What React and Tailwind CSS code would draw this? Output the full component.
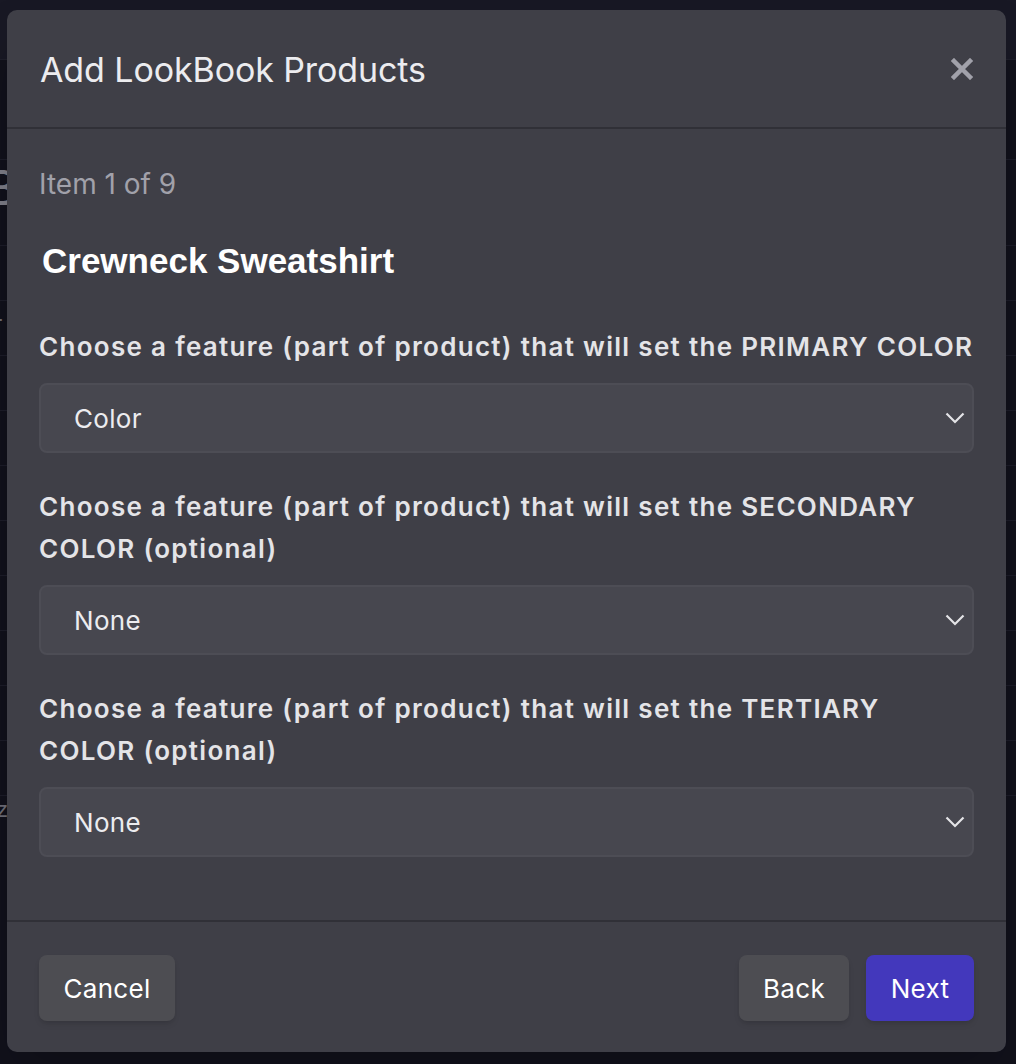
const features = [
  {
    label: "Choose a feature (part of product) that will set the PRIMARY COLOR",
    value: "Color",
  },
  {
    label:
      "Choose a feature (part of product) that will set the SECONDARY COLOR (optional)",
    value: "None",
  },
  {
    label:
      "Choose a feature (part of product) that will set the TERTIARY COLOR (optional)",
    value: "None",
  },
];

const FeatureSelect = ({ label, value, first }) => {
  return (
    <div className={first ? "mt-[45px]" : "mt-[33px]"}>
      <label className="block text-[26px] leading-[42px] font-semibold tracking-[1.3px] text-[#e4e4e7]">
        {label}
      </label>
      <div className="relative mt-[15px] h-[70px] rounded-lg border-2 border-[#4d4d55] bg-[#47474f]">
        <span className="absolute left-[33px] top-1/2 -translate-y-1/2 text-[26px] tracking-[0.3px] text-[#ececef]">
          {value}
        </span>
        <svg
          className="absolute right-[7px] top-1/2 -translate-y-1/2 text-[#e4e4e7]"
          width="20"
          height="12"
          viewBox="0 0 20 12"
          fill="none"
        >
          <path
            d="M1.5 1.5 L10 10 L18.5 1.5"
            stroke="currentColor"
            strokeWidth="2.2"
          />
        </svg>
      </div>
    </div>
  );
};

const App = () => {
  return (
    <div className="relative h-[1064px] w-[1016px] overflow-hidden bg-[#11111b] font-['Inter',sans-serif]">
      {/* page behind the modal */}
      <div className="h-[60px] border-b border-[#1f1f2b] bg-[#181824]" />
      <div className="flex flex-col">
        <div className="h-[100px] border-b border-[#1c1c28]" />
        <div className="h-[86px] border-b border-[#1c1c28]" />
        <div className="h-[55px] border-b border-[#1c1c28]" />
        <div className="h-[55px] border-b border-[#1c1c28]" />
        <div className="h-[55px] border-b border-[#1c1c28]" />
        <div className="h-[55px] border-b border-[#1c1c28]" />
        <div className="h-[55px] border-b border-[#1c1c28]" />
        <div className="h-[55px] border-b border-[#1c1c28]" />
        <div className="h-[55px] border-b border-[#1c1c28]" />
        <div className="h-[55px] border-b border-[#1c1c28]" />
        <div className="h-[55px] border-b border-[#1c1c28]" />
        <div className="h-[55px] border-b border-[#1c1c28]" />
      </div>
      <span className="absolute left-[-14px] top-[164px] text-[48px] leading-none text-[#7d7d87]">B</span>
      <span className="absolute left-[-6px] top-[312px] text-[22px] leading-none text-[#6d6d77]">r</span>
      <span className="absolute left-[-4px] top-[798px] text-[22px] leading-none text-[#6d6d77]">z</span>

      {/* modal */}
      <div className="absolute left-[7px] top-[10px] flex h-[1042px] w-[999px] flex-col rounded-[10px] bg-[#3f3f47] shadow-2xl">
        <div className="flex h-[119px] items-center justify-between border-b-2 border-[#303037] pl-[33px] pr-[33px]">
          <h2 className="pt-[2px] text-[34px] font-normal tracking-[-0.1px] text-[#ececef]">
            Add LookBook Products
          </h2>
          <button className="text-[#a1a1aa]">
            <svg width="22" height="22" viewBox="0 0 22 22">
              <path
                d="M3 3 L19 19 M19 3 L3 19"
                stroke="currentColor"
                strokeWidth="4.5"
                strokeLinecap="square"
              />
            </svg>
          </button>
        </div>

        <div className="flex-1 px-[32px] pt-[35px]">
          <p className="text-[28px] leading-[40px] text-[#a1a1aa]">Item 1 of 9</p>
          <h3 className="mt-[37px] pl-[3px] font-['Liberation_Sans',sans-serif] text-[35px] font-bold leading-[40px] text-white">
            Crewneck Sweatshirt
          </h3>
          {features.map((f, i) => (
            <FeatureSelect key={i} label={f.label} value={f.value} first={i === 0} />
          ))}
        </div>

        <div className="flex items-center justify-between border-t-2 border-[#303037] px-[32px] pb-[31px] pt-[33px]">
          <button className="h-[66px] w-[136px] rounded-lg bg-[#4d4d52] text-[26px] tracking-[0.3px] text-white shadow-md">
            Cancel
          </button>
          <div className="flex gap-[17px]">
            <button className="h-[66px] w-[110px] rounded-lg bg-[#4d4d52] text-[26px] tracking-[0.3px] text-white shadow-md">
              Back
            </button>
            <button className="h-[66px] w-[108px] rounded-lg bg-[#4338bc] text-[26px] tracking-[0.3px] text-white shadow-md">
              Next
            </button>
          </div>
        </div>
      </div>
    </div>
  );
};

export default App;
